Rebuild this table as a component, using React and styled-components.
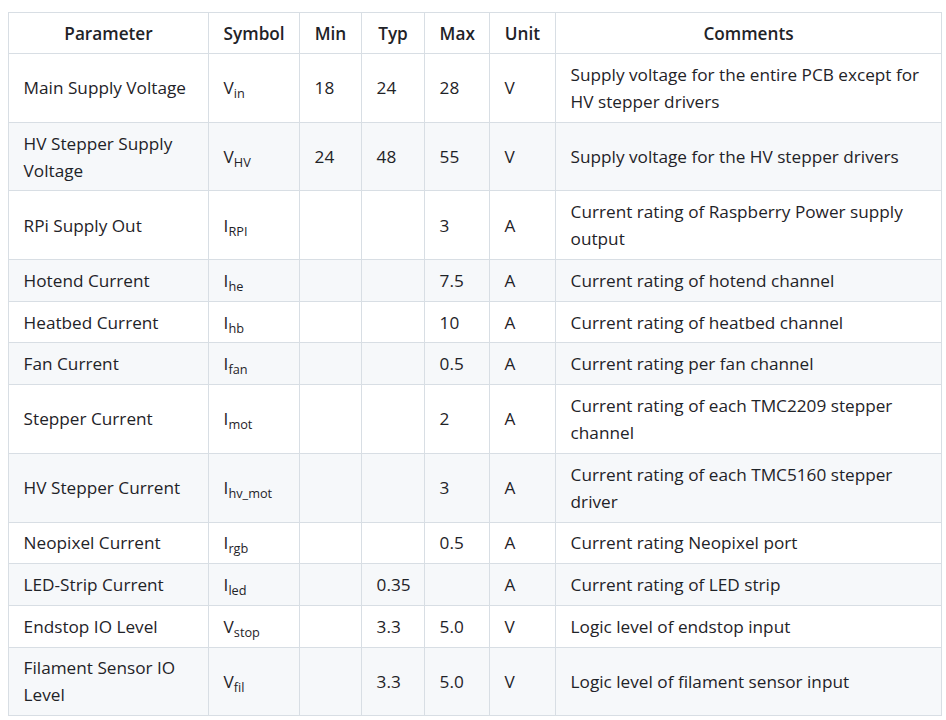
import React from "react";
import styled, { createGlobalStyle } from "styled-components";

const Global = createGlobalStyle`
  body {
    margin: 0;
    background: #fff;
    font-family: "Open Sans", "Noto Sans", sans-serif;
    color: #1f2328;
  }
`;

const Page = styled.div`
  padding: 12px 5px 0 8px;
`;

const Table = styled.table`
  border-collapse: collapse;
  table-layout: fixed;
  width: 933px;
  font-size: 17.2px;
  line-height: 27px;
`;

const HeadCell = styled.th`
  border: 1px solid #d8dee4;
  padding: 6.5px 14.6px;
  font-weight: 600;
  text-align: center;
  vertical-align: middle;
`;

const Row = styled.tr`
  background: ${(p) => (p.$striped ? "#f6f8fa" : "#ffffff")};
`;

const Cell = styled.td`
  border: 1px solid #d8dee4;
  padding: 6.85px 14.6px;
  text-align: left;
  vertical-align: middle;
`;

const Sub = styled.sub`
  font-size: 74%;
  line-height: 0;
  vertical-align: -0.3em;
`;

const columns = [
  { label: "Parameter", width: 200 },
  { label: "Symbol", width: 91 },
  { label: "Min", width: 62 },
  { label: "Typ", width: 63 },
  { label: "Max", width: 65 },
  { label: "Unit", width: 66 },
  { label: "Comments", width: 386 },
];

const rows = [
  ["Main Supply Voltage", "V", "in", "18", "24", "28", "V", "Supply voltage for the entire PCB except for HV stepper drivers"],
  ["HV Stepper Supply Voltage", "V", "HV", "24", "48", "55", "V", "Supply voltage for the HV stepper drivers"],
  ["RPi Supply Out", "I", "RPI", "", "", "3", "A", "Current rating of Raspberry Power supply output"],
  ["Hotend Current", "I", "he", "", "", "7.5", "A", "Current rating of hotend channel"],
  ["Heatbed Current", "I", "hb", "", "", "10", "A", "Current rating of heatbed channel"],
  ["Fan Current", "I", "fan", "", "", "0.5", "A", "Current rating per fan channel"],
  ["Stepper Current", "I", "mot", "", "", "2", "A", "Current rating of each TMC2209 stepper channel"],
  ["HV Stepper Current", "I", "hv_mot", "", "", "3", "A", "Current rating of each TMC5160 stepper driver"],
  ["Neopixel Current", "I", "rgb", "", "", "0.5", "A", "Current rating Neopixel port"],
  ["LED-Strip Current", "I", "led", "", "0.35", "", "A", "Current rating of LED strip"],
  ["Endstop IO Level", "V", "stop", "", "3.3", "5.0", "V", "Logic level of endstop input"],
  ["Filament Sensor IO Level", "V", "fil", "", "3.3", "5.0", "V", "Logic level of filament sensor input"],
];

export default function App() {
  return (
    <>
      <Global />
      <Page>
        <Table>
          <colgroup>
            {columns.map((c) => (
              <col key={c.label} style={{ width: c.width }} />
            ))}
          </colgroup>
          <thead>
            <tr>
              {columns.map((c) => (
                <HeadCell key={c.label}>{c.label}</HeadCell>
              ))}
            </tr>
          </thead>
          <tbody>
            {rows.map(([name, sym, sub, min, typ, max, unit, comment], i) => (
              <Row key={name} $striped={i % 2 === 1}>
                <Cell>{name}</Cell>
                <Cell>
                  {sym}
                  <Sub>{sub}</Sub>
                </Cell>
                <Cell>{min}</Cell>
                <Cell>{typ}</Cell>
                <Cell>{max}</Cell>
                <Cell>{unit}</Cell>
                <Cell>{comment}</Cell>
              </Row>
            ))}
          </tbody>
        </Table>
      </Page>
    </>
  );
}
